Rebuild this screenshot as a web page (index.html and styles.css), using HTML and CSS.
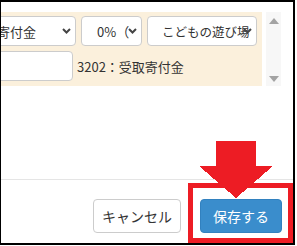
FILE: index.html
```html
<!DOCTYPE html>
<html lang="ja">
<head>
    <meta charset="UTF-8">
    <title>仕訳の編集</title>
    <link rel="stylesheet" href="styles.css">
</head>
<body>
    <div class="frame">
        <div class="edit">
            <div class="panel">
                <div class="row">
                    <div class="select select-account">
                        <span class="select-text">受取寄付金</span>
                        <svg class="chevron" width="9" height="6" viewBox="0 0 9 6"><path d="M1 1 L4.5 4.5 L8 1" fill="none" stroke="#444" stroke-width="2"/></svg>
                    </div>
                    <div class="select select-tax">
                        <span class="select-text">0%（非課税）</span>
                        <svg class="chevron" width="9" height="6" viewBox="0 0 9 6"><path d="M1 1 L4.5 4.5 L8 1" fill="none" stroke="#444" stroke-width="2"/></svg>
                    </div>
                    <div class="select select-dept">
                        <span class="select-text">こどもの遊び場</span>
                        <svg class="chevron" width="9" height="6" viewBox="0 0 9 6"><path d="M1 1 L4.5 4.5 L8 1" fill="none" stroke="#444" stroke-width="2"/></svg>
                    </div>
                </div>
                <div class="row">
                    <div class="input"></div>
                    <span class="code">3202：受取寄付金</span>
                </div>
            </div>
            <div class="scrollbar">
                <svg width="10" height="6" viewBox="0 0 10 6"><path d="M5 0 L10 6 L0 6 Z" fill="#a3a3a3"/></svg>
                <svg width="10" height="6" viewBox="0 0 10 6"><path d="M0 0 L10 0 L5 6 Z" fill="#a3a3a3"/></svg>
            </div>
        </div>
        <div class="footer">
            <button class="btn btn-default">キャンセル</button>
            <button class="btn btn-primary">保存する</button>
        </div>

        <!-- 注釈：赤枠と矢印 -->
        <div class="mark-box"></div>
        <svg class="mark-arrow" width="74" height="57" viewBox="0 0 74 57" shape-rendering="crispEdges">
            <polygon points="17,0 57,0 57,25 74,25 37,57 0,25 17,25" fill="#ed1c24"/>
        </svg>
    </div>
</body>
</html>
```

FILE: styles.css
```css
body {
    margin: 0;
    background: #fff;
    font-family: "Noto Sans CJK JP", "Noto Sans", sans-serif;
    color: #333;
}

.frame {
    position: relative;
    box-sizing: border-box;
    width: 295px;
    height: 245px;
    border-style: solid;
    border-color: #000;
    border-width: 2px 2px 2px 1px;
    overflow: hidden;
}

.edit {
    display: flex;
    padding-top: 10px;
}

.panel {
    box-sizing: border-box;
    width: 261px;
    height: 74px;
    padding: 4px 5px 5px 0;
    background: #fbf0dc;
    display: flex;
    flex-direction: column;
    gap: 5px;
}

.row {
    display: flex;
    align-items: center;
    gap: 5px;
    height: 30px;
}

.select {
    position: relative;
    box-sizing: border-box;
    height: 30px;
    flex: none;
    display: flex;
    align-items: center;
    padding: 0 5px 0 15px;
    background: #fff;
    border: 1px solid #ccc;
    border-radius: 4px;
    font-size: 13px;
    overflow: hidden;
}

.select-text {
    white-space: nowrap;
    overflow: hidden;
}

.chevron {
    position: absolute;
    right: 4px;
    top: 11px;
}

.select-account {
    width: 121px;
    margin-left: -46px;
}

.select-tax {
    width: 61px;
}

.select-tax .select-text {
    width: 32px;
}

.select-dept {
    width: 110px;
    padding: 0 0 0 14px;
    font-size: 12.5px;
}

.input {
    box-sizing: border-box;
    width: 90px;
    height: 30px;
    margin-left: -18px;
    background: #fff;
    border: 1px solid #ccc;
    border-radius: 4px;
    flex: none;
}

.code {
    font-size: 13px;
    margin-left: -1px;
    white-space: nowrap;
}

.scrollbar {
    box-sizing: border-box;
    width: 15px;
    height: 74px;
    margin-left: 4px;
    padding: 6px 0 4px 3px;
    background: #f7f7f7;
    display: flex;
    flex-direction: column;
    justify-content: space-between;
}

.scrollbar svg {
    display: block;
}

.footer {
    margin-top: 93px;
    border-top: 1px solid #e5e5e5;
    padding: 19px 11px 0 0;
    display: flex;
    justify-content: flex-end;
    gap: 19px;
}

.btn {
    box-sizing: border-box;
    height: 34px;
    padding: 0;
    border-radius: 4px;
    font-family: inherit;
    font-size: 14px;
    line-height: 32px;
    text-align: center;
}

.btn-default {
    width: 88px;
    background: #fff;
    border: 1px solid #ccc;
    color: #333;
}

.btn-primary {
    width: 82px;
    background: #3a8dcc;
    border: 1px solid #3281bf;
    color: #fff;
}

.mark-box {
    position: absolute;
    left: 187px;
    top: 181px;
    box-sizing: border-box;
    width: 105px;
    height: 60px;
    border: 5px solid #ed1c24;
}

.mark-arrow {
    position: absolute;
    left: 198px;
    top: 139px;
}
```
